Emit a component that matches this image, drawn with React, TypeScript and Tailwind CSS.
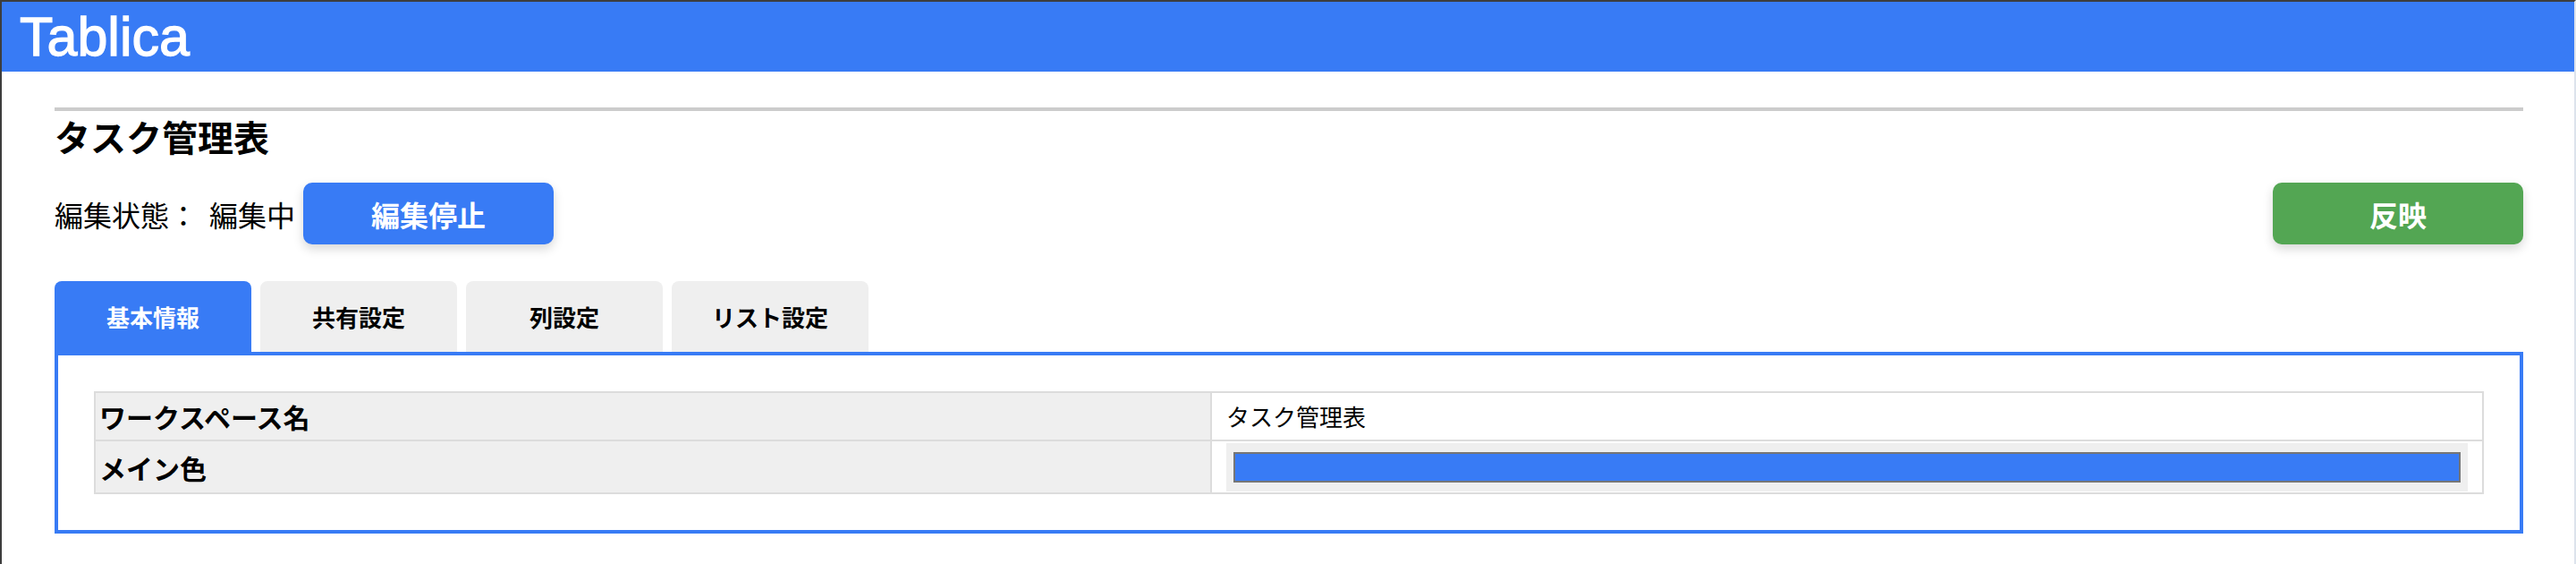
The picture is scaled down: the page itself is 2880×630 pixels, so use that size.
const BLUE = 'bg-[#387bf5]';

const tabs = ['基本情報', '共有設定', '列設定', 'リスト設定'];

function ActionButton({ label, color }: { label: string; color: string }) {
  return (
    <button
      type="button"
      className={`flex h-[69px] w-[280px] items-center justify-center rounded-[10px] text-[32px] font-bold text-white shadow-[0_5px_12px_rgba(0,0,0,0.16)] ${color}`}
    >
      {label}
    </button>
  );
}

export default function App() {
  return (
    <div className="min-h-[630px] border-t-2 border-l-2 border-r-2 border-t-[#3d3d3d] border-l-[#3d3d3d] border-r-[#dde3ec] bg-white font-['Noto_Sans_CJK_JP',sans-serif] text-black">
      {/* Header */}
      <header className={`flex h-[78px] items-center pl-5 ${BLUE}`}>
        <span className="font-['Liberation_Sans',sans-serif] text-[61px] leading-none text-white [-webkit-text-stroke:1.3px_white]">
          Tablica
        </span>
      </header>

      <main className="pt-10 pl-[59px] pr-[57px]">
        <div className="h-1 bg-[#cccccc]" />
        <h1 className="mt-1 text-[40px] font-bold leading-[48px]">タスク管理表</h1>

        {/* Edit state row */}
        <div className="mt-7 flex items-center justify-between">
          <div className="flex items-center text-[32px] leading-none">
            <span>編集状態：</span>
            <span className="ml-[13px]">編集中</span>
            <div className="ml-[9px]">
              <ActionButton label="編集停止" color={BLUE} />
            </div>
          </div>
          <ActionButton label="反映" color="bg-[#53a653]" />
        </div>

        {/* Tabs */}
        <div className="mt-[41px] flex gap-[10px]">
          {tabs.map((tab, i) => (
            <div
              key={tab}
              className={`flex h-[79px] w-[220px] items-center justify-center rounded-t-lg text-[26px] font-bold ${
                i === 0 ? `${BLUE} text-white` : 'bg-[#efefef] text-black'
              }`}
            >
              {tab}
            </div>
          ))}
        </div>

        {/* Panel */}
        <div className="border-4 border-[#387bf5] p-10">
          <table className="w-full border-collapse">
            <tbody>
              <tr>
                <td className="w-[1248px] border-2 border-[#dcdcdc] bg-[#efefef] px-1 text-[30px] font-bold leading-[52px]">
                  ワークスペース名
                </td>
                <td className="border-2 border-[#dcdcdc] px-4 text-[26px] leading-[52px]">タスク管理表</td>
              </tr>
              <tr>
                <td className="border-2 border-[#dcdcdc] bg-[#efefef] px-1 align-middle text-[30px] font-bold leading-[44px]">
                  メイン色
                </td>
                <td className="border-2 border-[#dcdcdc] px-4 pt-[2px] pb-px">
                  <div className="h-[54px] bg-[#efefef] px-2 py-[10px]">
                    <div className={`h-full border-2 border-[#767676] ${BLUE}`} />
                  </div>
                </td>
              </tr>
            </tbody>
          </table>
        </div>
      </main>
    </div>
  );
}
